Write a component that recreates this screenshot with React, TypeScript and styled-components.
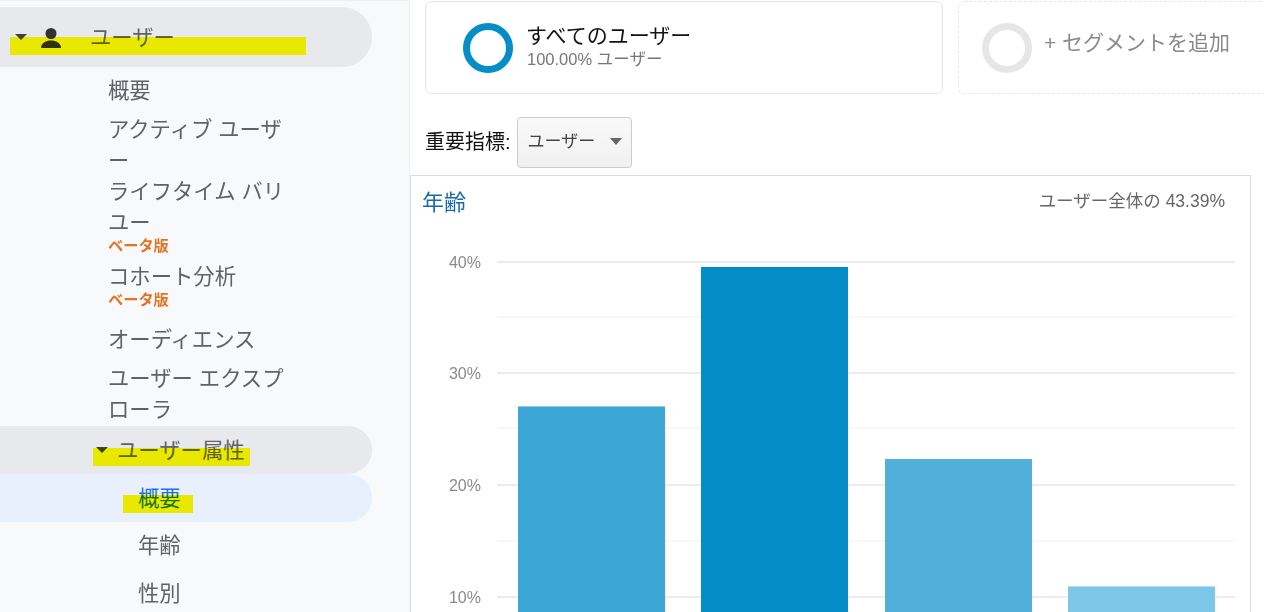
import styled, { createGlobalStyle } from 'styled-components';

const GlobalStyle = createGlobalStyle`
  html, body {
    margin: 0;
    padding: 0;
    background: #fff;
    overflow: hidden;
  }
  body {
    font-family: 'Liberation Sans', 'Noto Sans CJK JP', sans-serif;
  }
`;

const GRID_MAJOR = [
  { y: 36, label: '40%' },
  { y: 147, label: '30%' },
  { y: 259, label: '20%' },
  { y: 371, label: '10%' },
];
const GRID_MINOR = [91, 202, 315];
const BARS = [
  { x: 107, top: 180, fill: '#3ca6d6', cap: '#8ccbe8' },
  { x: 290, top: 41, fill: '#058dc7', cap: '#058dc7' },
  { x: 474, top: 233, fill: '#50b0da', cap: '#50b0da' },
  { x: 657, top: 360, fill: '#7dc6e7', cap: '#b2def2' },
];

const App = () => {
  return (
    <Page>
      <GlobalStyle />
      <Sidebar>
        <SectionRow>
          <Highlight $left={10} $top={30} $width={296} />
          <Caret />
          <PersonIcon viewBox="0 0 22 22">
            <circle cx="11" cy="6.5" r="5.5" fill="#333" />
            <path d="M1 21c0-5 5-7.5 10-7.5S21 16 21 21z" fill="#333" />
          </PersonIcon>
          <SectionLabel>ユーザー</SectionLabel>
        </SectionRow>
        <NavList>
          <NavItem $gap={8}>概要</NavItem>
          <NavItem $gap={0}>
            アクティブ ユーザ
            <br />ー
          </NavItem>
          <NavItem $gap={8}>
            ライフタイム バリ
            <br />
            ユー
            <Beta>ベータ版</Beta>
          </NavItem>
          <NavItem $gap={17}>
            コホート分析
            <Beta>ベータ版</Beta>
          </NavItem>
          <NavItem $gap={8}>オーディエンス</NavItem>
          <NavItem $gap={0}>
            ユーザー エクスプ
            <br />
            ローラ
          </NavItem>
        </NavList>
        <SubSectionRow>
          <Highlight $left={93} $top={22} $width={157} />
          <Caret />
          <SubSectionLabel>ユーザー属性</SubSectionLabel>
        </SubSectionRow>
        <ActiveRow>
          <Highlight $left={123} $top={21} $width={70} />
          概要
        </ActiveRow>
        <SubItem>年齢</SubItem>
        <SubItem>性別</SubItem>
      </Sidebar>
      <Main>
        <SegmentBar>
          <SegmentCard>
            <Ring $color="#058dc7" />
            <SegmentText>
              <SegmentName>すべてのユーザー</SegmentName>
              <SegmentMeta>100.00% ユーザー</SegmentMeta>
            </SegmentText>
          </SegmentCard>
          <AddSegmentCard>
            <Ring $color="#e6e6e6" />
            <AddLabel>+ セグメントを追加</AddLabel>
          </AddSegmentCard>
        </SegmentBar>
        <MetricBar>
          <MetricLabel>重要指標:</MetricLabel>
          <MetricSelect>
            ユーザー
            <SelectCaret />
          </MetricSelect>
        </MetricBar>
        <ChartPanel>
          <ChartHeader>
            <ChartTitle>年齢</ChartTitle>
            <ChartShare>ユーザー全体の 43.39%</ChartShare>
          </ChartHeader>
          <ChartSvg viewBox="0 0 839 386">
            {GRID_MINOR.map((y) => (
              <rect key={y} x={86} y={y - 1} width={738} height={2} fill="#f7f7f7" />
            ))}
            {GRID_MAJOR.map((g) => (
              <g key={g.y}>
                <rect x={86} y={g.y - 1} width={738} height={2} fill="#ececec" />
                <AxisLabel x={70} y={g.y + 6} textAnchor="end">
                  {g.label}
                </AxisLabel>
              </g>
            ))}
            {BARS.map((b) => (
              <g key={b.x}>
                <rect x={b.x} y={b.top} width={147} height={386 - b.top} fill={b.fill} />
                <rect x={b.x} y={b.top} width={147} height={1} fill={b.cap} />
              </g>
            ))}
          </ChartSvg>
        </ChartPanel>
      </Main>
    </Page>
  );
};

const Page = styled.div`
  display: grid;
  grid-template-columns: 410px 1fr;
  width: 1264px;
  height: 612px;
  overflow: hidden;
`;

const Sidebar = styled.nav`
  box-sizing: border-box;
  height: 612px;
  padding-top: 6px;
  padding-right: 37px;
  background: #f8f9fb;
  border-top: 1px solid #eef0f2;
  border-right: 1px solid #f1f2f4;
  color: #5f6368;
  font-size: 21.33px;
`;

const Highlight = styled.span<{ $left: number; $top: number; $width: number }>`
  position: absolute;
  left: ${(p) => p.$left}px;
  top: ${(p) => p.$top}px;
  width: ${(p) => p.$width}px;
  height: 18px;
  background: #ebe800;
  mix-blend-mode: darken;
`;

const Caret = styled.span`
  flex: none;
  width: 0;
  height: 0;
  border-left: 6px solid transparent;
  border-right: 6px solid transparent;
  border-top: 6px solid #404246;
`;

const SectionRow = styled.div`
  position: relative;
  display: flex;
  align-items: center;
  height: 60px;
  padding-left: 15px;
  background: #e8e9ec;
  border-radius: 0 30px 30px 0;
`;

const PersonIcon = styled.svg`
  flex: none;
  width: 22px;
  height: 22px;
  margin: 1px 0 0 13px;
`;

const SectionLabel = styled.span`
  margin: 0 0 4px 28px;
`;

const NavList = styled.ul`
  list-style: none;
  margin: 9px 0 0;
  padding: 0 0 0 108px;
`;

const NavItem = styled.li<{ $gap: number }>`
  line-height: 31px;
  margin-bottom: ${(p) => p.$gap}px;
  white-space: nowrap;
`;

const Beta = styled.span`
  display: block;
  margin-top: -1px;
  color: #e37325;
  font-size: 15.2px;
  font-weight: 700;
  line-height: 16px;
`;

const SubSectionRow = styled.div`
  position: relative;
  display: flex;
  align-items: center;
  height: 48px;
  padding-left: 96px;
  background: #e8e9ec;
  border-radius: 0 24px 24px 0;
`;

const SubSectionLabel = styled.span`
  margin: 0 0 4px 9px;
`;

const ActiveRow = styled.div`
  position: relative;
  height: 48px;
  padding-left: 138px;
  background: #e8f0fe;
  border-radius: 0 24px 24px 0;
  color: #1a73e8;
  line-height: 50px;
`;

const SubItem = styled.div`
  height: 48px;
  padding-left: 138px;
  line-height: 48px;
`;

const Main = styled.main`
  display: flex;
  flex-direction: column;
  min-width: 0;
`;

const SegmentBar = styled.div`
  display: flex;
  gap: 15px;
  margin-top: 1px;
  padding-left: 15px;
`;

const SegmentCard = styled.div`
  box-sizing: border-box;
  display: flex;
  align-items: center;
  flex: none;
  width: 518px;
  height: 93px;
  padding-left: 37px;
  border: 1px solid #e5e5e5;
  border-radius: 6px;
`;

const AddSegmentCard = styled(SegmentCard)`
  width: 400px;
  padding-left: 23px;
  border-style: dashed;
`;

const Ring = styled.span<{ $color: string }>`
  box-sizing: border-box;
  flex: none;
  width: 50px;
  height: 50px;
  border: 7px solid ${(p) => p.$color};
  border-radius: 50%;
`;

const SegmentText = styled.div`
  margin-left: 13px;
  margin-bottom: 4px;
`;

const SegmentName = styled.div`
  color: #111;
  font-size: 21px;
  line-height: 26px;
`;

const SegmentMeta = styled.div`
  margin-left: 1px;
  color: #777;
  font-size: 16.5px;
  line-height: 20px;
`;

const AddLabel = styled.span`
  margin-left: 12px;
  margin-bottom: 14px;
  color: #8a8a8a;
  font-size: 21px;
`;

const MetricBar = styled.div`
  display: flex;
  align-items: center;
  gap: 6px;
  margin-top: 23px;
  padding-left: 15px;
`;

const MetricLabel = styled.span`
  margin-bottom: 4px;
  color: #111;
  font-size: 20px;
`;

const MetricSelect = styled.div`
  box-sizing: border-box;
  display: flex;
  align-items: center;
  justify-content: space-between;
  width: 115px;
  height: 51px;
  padding: 0 9px 6px 10px;
  background: linear-gradient(#f9f9f9, #f1f1f1);
  border: 1px solid #ccc;
  border-radius: 4px;
  color: #444;
  font-size: 17px;
`;

const SelectCaret = styled.span`
  width: 0;
  height: 0;
  margin-top: 4px;
  border-left: 6px solid transparent;
  border-right: 6px solid transparent;
  border-top: 7px solid #666;
`;

const ChartPanel = styled.section`
  box-sizing: border-box;
  flex: none;
  width: 841px;
  height: 437px;
  margin-top: 7px;
  border-top: 1px solid #ddd;
  border-left: 1px solid #ddd;
  border-right: 1px solid #ddd;
`;

const ChartHeader = styled.header`
  display: flex;
  align-items: center;
  justify-content: space-between;
  height: 50px;
  padding: 0 25px 0 11px;
`;

const ChartTitle = styled.h2`
  margin: 0 0 2px;
  color: #1a6aa8;
  font-size: 22px;
  font-weight: 400;
`;

const ChartShare = styled.span`
  margin-bottom: 3px;
  color: #666;
  font-size: 17.5px;
`;

const ChartSvg = styled.svg`
  display: block;
  width: 839px;
  height: 386px;
`;

const AxisLabel = styled.text`
  fill: #8a8a8a;
  font-size: 16px;
`;

export default App;
